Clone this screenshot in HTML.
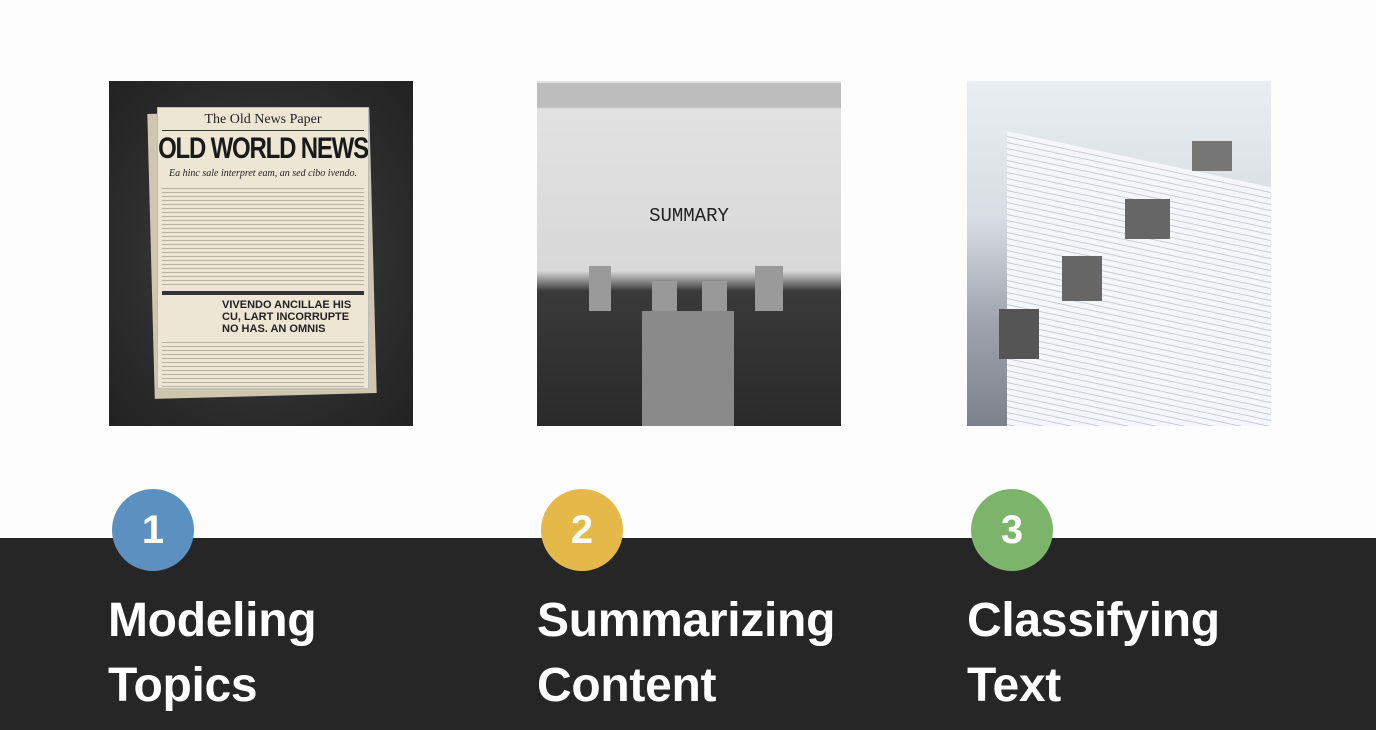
<!DOCTYPE html>
<html><head><meta charset="utf-8"><style>
*{margin:0;padding:0;box-sizing:border-box}
body{width:1376px;height:730px;background:#fdfdfd;position:relative;overflow:hidden;font-family:"Liberation Sans",sans-serif}
.band{position:absolute;left:0;top:538px;width:1376px;height:192px;background:#262626}
.img{position:absolute;top:81px;width:304px;height:345px;overflow:hidden}
.c{position:absolute;top:489px;width:82px;height:82px;border-radius:50%;color:#fff;font-weight:bold;font-size:40px;text-align:center;line-height:82px}
.t{position:absolute;top:588px;color:#fff;font-weight:bold;font-size:48px;line-height:65px;letter-spacing:-0.3px}
</style></head><body>
<div class="band"></div>

<div class="img" style="left:109px;background:radial-gradient(ellipse at 50% 50%,#444 0%,#2a2a2a 70%,#222 100%)">
 <div style="position:absolute;left:42px;top:30px;width:222px;height:285px;background:#cfc6b0;transform:rotate(-1.5deg)"></div>
 <div style="position:absolute;left:48px;top:26px;width:212px;height:282px;background:#ede6d4;border:1px solid #bbb;overflow:hidden">
  <div style="text-align:center;font-family:'Liberation Serif',serif;font-size:14px;margin-top:4px;color:#222">The Old News Paper</div>
  <div style="border-top:1px solid #333;margin:2px 4px"></div>
  <div style="text-align:center;font-weight:bold;font-size:24px;color:#1a1a1a;letter-spacing:-1.2px;white-space:nowrap;transform:scaleY(1.25);margin-top:4px">OLD WORLD NEWS</div>
  <div style="text-align:center;font-family:'Liberation Serif',serif;font-style:italic;font-size:10px;color:#222;margin-top:5px">Ea hinc sale interpret eam, an sed cibo ivendo.</div>
  <div style="margin:6px 4px;height:100px;background:repeating-linear-gradient(#ede6d4 0 3px,#b9b2a2 3px 4px)"></div>
  <div style="margin:0 4px;height:4px;background:#333"></div>
  <div style="margin:4px 4px;font-weight:bold;font-size:11px;color:#222;padding-left:60px">VIVENDO ANCILLAE HIS CU, LART INCORRUPTE NO HAS. AN OMNIS</div>
  <div style="margin:4px 4px;height:80px;background:repeating-linear-gradient(#ede6d4 0 3px,#b9b2a2 3px 4px)"></div>
 </div>
</div>

<div class="img" style="left:537px;background:linear-gradient(#e0e0e0 0,#e0e0e0 2px,#bdbdbd 2px,#bdbdbd 26px,#e2e2e2 28px,#d8d8d8 190px,#3a3a3a 210px,#2a2a2a 100%)">
 <div style="position:absolute;top:124px;width:100%;text-align:center;font-family:'Liberation Mono',monospace;font-size:19px;color:#222">SUMMARY</div>
 <div style="position:absolute;left:105px;top:230px;width:92px;height:115px;background:#8a8a8a"></div>
 <div style="position:absolute;left:115px;top:200px;width:25px;height:30px;background:#999"></div>
 <div style="position:absolute;left:165px;top:200px;width:25px;height:30px;background:#999"></div>
 <div style="position:absolute;left:52px;top:185px;width:22px;height:45px;background:#9a9a9a"></div>
 <div style="position:absolute;left:218px;top:185px;width:28px;height:45px;background:#9a9a9a"></div>
</div>

<div class="img" style="left:967px;background:linear-gradient(#e8eef2 0,#d8dde2 40%,#9ea3ad 70%,#7d818c 100%)">
 <div style="position:absolute;left:40px;top:50px;width:300px;height:300px;background:repeating-linear-gradient(#f4f6f9 0 5px,#c9ced8 5px 6px);transform:skewY(12deg);transform-origin:0 0"></div>
 <div style="position:absolute;left:225px;top:60px;width:40px;height:30px;background:#777"></div>
 <div style="position:absolute;left:158px;top:118px;width:45px;height:40px;background:#666"></div>
 <div style="position:absolute;left:95px;top:175px;width:40px;height:45px;background:#666"></div>
 <div style="position:absolute;left:32px;top:228px;width:40px;height:50px;background:#555"></div>
</div>

<div class="c" style="left:112px;background:#5c90c1">1</div>
<div class="c" style="left:541px;background:#e4b94a">2</div>
<div class="c" style="left:971px;background:#7bb46a">3</div>

<div class="t" style="left:108px">Modeling<br>Topics</div>
<div class="t" style="left:537px">Summarizing<br>Content</div>
<div class="t" style="left:967px">Classifying<br>Text</div>
</body></html>
